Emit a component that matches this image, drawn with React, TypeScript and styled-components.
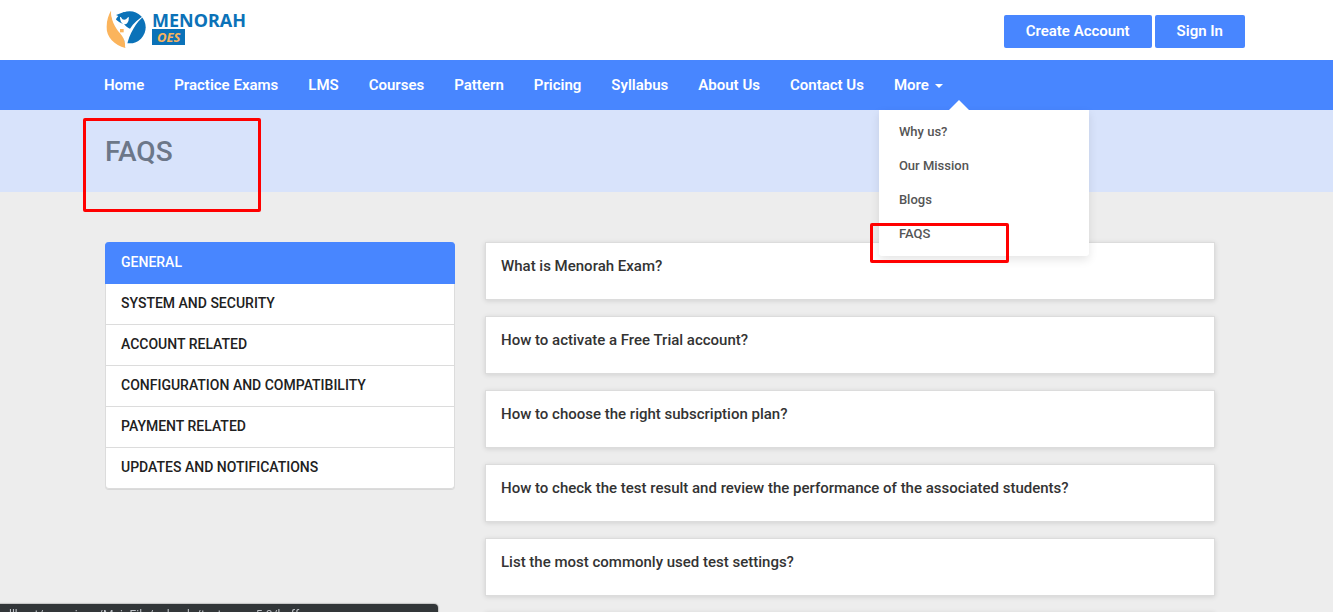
import React from "react";
import styled, { createGlobalStyle } from "styled-components";

const BLUE = "#4886ff";

const GlobalStyle = createGlobalStyle`
  *, *::before, *::after { box-sizing: border-box; }
  body {
    margin: 0;
    background: #ededed;
    color: #212529;
    font-family: Roboto, "Liberation Sans", sans-serif;
    font-size: 15px;
  }
  h1, h2, ul { margin: 0; padding: 0; }
  ul { list-style: none; }
  a { color: inherit; text-decoration: none; }
  button { font-family: inherit; border: 0; cursor: pointer; }
`;

const Page = styled.div`
  min-height: 100vh;
`;

const Container = styled.div`
  width: calc(100% - 13px);
  max-width: 1153px;
  margin: 0 auto;
  padding: 0 28px 0 15px;
`;

const Header = styled.header`
  background: #fff;
`;

const HeaderRow = styled(Container)`
  display: flex;
  align-items: center;
  justify-content: space-between;
  height: 60px;
`;

const Logo = styled.a`
  display: flex;
  align-items: center;
  gap: 5px;
`;

const LogoWords = styled.span`
  display: flex;
  flex-direction: column;
  align-items: flex-start;
  padding-bottom: 4px;
  font-family: "Noto Sans", "Open Sans", sans-serif;
  font-weight: 700;
`;

const LogoName = styled.span`
  color: #0b72b8;
  font-size: 18px;
  line-height: 18px;
`;

const LogoTag = styled.span`
  padding: 0 5px;
  background: #0b72b8;
  color: #fbb45c;
  font-size: 13px;
  font-style: italic;
  line-height: 16px;
`;

const Actions = styled.div`
  display: flex;
  gap: 3px;
  margin-right: -30px;
  padding-top: 2px;
`;

const ActionButton = styled.button`
  height: 33px;
  padding: 0 22px;
  border-radius: 2px;
  background: ${BLUE};
  color: #fff;
  font-size: 15px;
  font-weight: 600;
`;

const NavBar = styled.nav`
  background: ${BLUE};
`;

const NavList = styled.ul`
  display: flex;
  margin: 0 -16px;
`;

const NavItem = styled.li`
  position: relative;
`;

const NavLink = styled.a`
  display: flex;
  align-items: center;
  height: 50px;
  padding: 0 15px;
  color: #fff;
  font-size: 15px;
  font-weight: 600;
  white-space: nowrap;
`;

const Caret = styled.span`
  margin: 2px 0 0 6px;
  border: 4px solid transparent;
  border-top-color: #fff;
  border-bottom: 0;
`;

const Menu = styled.ul`
  position: absolute;
  z-index: 2;
  top: 50px;
  left: 0;
  width: 210px;
  padding: 5px 0;
  border-radius: 0 0 3px 3px;
  background: #fff;
  box-shadow: 0 4px 10px rgba(0, 0, 0, 0.1);

  &::before {
    content: "";
    position: absolute;
    top: -10px;
    left: 70px;
    border: 10px solid transparent;
    border-top: 0;
    border-bottom-color: #fff;
  }
`;

const MenuLink = styled.a`
  display: block;
  padding: 0 20px;
  color: #555;
  font-size: 13px;
  font-weight: 500;
  line-height: 34px;
`;

const Highlight = styled.span<{ $top: number; $left: number; $width: number; $height: number }>`
  position: absolute;
  z-index: 3;
  top: ${(p) => p.$top}px;
  left: ${(p) => p.$left}px;
  width: ${(p) => p.$width}px;
  height: ${(p) => p.$height}px;
  border: 3px solid #f00;
  border-radius: 2px;
  pointer-events: none;
`;

const Banner = styled.section`
  background: #d8e3fb;
`;

const BannerRow = styled.div`
  position: relative;
  padding: 25px 0 23px;
`;

const Title = styled.h1`
  color: #6c7789;
  font-size: 28px;
  font-weight: 500;
  line-height: 34px;
`;

const Columns = styled(Container)`
  display: grid;
  grid-template-columns: minmax(0, 350fr) minmax(0, 730fr);
  gap: 30px;
  align-items: start;
  padding-top: 50px;
  padding-bottom: 50px;
`;

const Topics = styled.ul`
  border-radius: 4px;
  box-shadow: 0 1px 0 #d8d8d8;
`;

const Topic = styled.li`
  border: 1px solid #dcdcdc;
  border-top: 0;
  background: #fff;

  &:first-child {
    border-color: ${BLUE};
    border-radius: 4px 4px 0 0;
    background: ${BLUE};
  }
  &:last-child {
    border-radius: 0 0 4px 4px;
  }
`;

const TopicLink = styled.a<{ $active: boolean }>`
  display: block;
  padding: ${(p) => (p.$active ? 10 : 9)}px 15px 11px;
  color: ${(p) => (p.$active ? "#fff" : "#212121")};
  font-size: 14px;
  font-weight: 500;
  line-height: 20px;
  text-transform: uppercase;
`;

const Questions = styled.div`
  display: flex;
  flex-direction: column;
  gap: 16px;
`;

const Card = styled.h2`
  min-height: 58px;
  border: 1px solid #dcdcdc;
  background: #fff;
  box-shadow: 0 1px 5px rgba(0, 0, 0, 0.12);
`;

const Question = styled.button`
  display: block;
  width: 100%;
  padding: 13px 15px 23px;
  background: transparent;
  color: #333;
  font-size: 15px;
  font-weight: 500;
  line-height: 20px;
  text-align: left;
`;

const StatusBar = styled.div`
  position: fixed;
  z-index: 4;
  bottom: 0;
  left: 0;
  width: 438px;
  max-width: 100%;
  height: 8px;
  padding: 4px 9px 0;
  overflow: hidden;
  border-radius: 0 4px 0 0;
  background: #323639;
  box-shadow: 0 0 1px 1px #c4c4c4;
  color: #bdc1c6;
  font-size: 12px;
  line-height: 14px;
  white-space: nowrap;
`;

const links = ["Home", "Practice Exams", "LMS", "Courses", "Pattern", "Pricing", "Syllabus", "About Us", "Contact Us"];
const menu = ["Why us?", "Our Mission", "Blogs", "FAQS"];
const topics = [
  "General",
  "System and Security",
  "Account Related",
  "Configuration and Compatibility",
  "Payment Related",
  "Updates and Notifications",
];
const questions = [
  "What is Menorah Exam?",
  "How to activate a Free Trial account?",
  "How to choose the right subscription plan?",
  "How to check the test result and review the performance of the associated students?",
  "List the most commonly used test settings?",
];

function LogoMark() {
  return (
    <svg width="42" height="40" viewBox="9 14 126 120" aria-hidden="true">
      <circle cx="83" cy="66" r="48" fill="#0b72b8" />
      <path d="M27 16C28 42 38 60 52 76C64 90 70 104 70 128C38 120 12 94 14 64C14 44 20 28 27 16Z" fill="#fbb45c" />
      <path
        d="M27 18L38 38C46 48 56 54 66 56C72 64 78 68 84 70C94 54 110 40 128 30C102 52 82 84 74 124L70 126C70 104 62 94 54 84C38 66 28 46 27 18Z"
        fill="#fff"
      />
      <path d="M54 34L80 34C82 50 74 57 67 57C60 56 54 48 54 34Z" fill="#fff" />
      <path d="M42 29L66 20L92 29L78 36C70 46 62 46 57 36Z" fill="#0b72b8" />
      <rect x="54" y="71" width="11" height="10" fill="#fbb45c" />
    </svg>
  );
}

export default function App() {
  return (
    <Page>
      <GlobalStyle />
      <Header>
        <HeaderRow>
          <Logo href="#" aria-label="Menorah OES">
            <LogoMark />
            <LogoWords>
              <LogoName>MENORAH</LogoName>
              <LogoTag>OES</LogoTag>
            </LogoWords>
          </Logo>
          <Actions>
            <ActionButton type="button">Create Account</ActionButton>
            <ActionButton type="button">Sign In</ActionButton>
          </Actions>
        </HeaderRow>
      </Header>
      <NavBar>
        <Container>
          <NavList>
            {links.map((text) => (
              <NavItem key={text}>
                <NavLink href="#">{text}</NavLink>
              </NavItem>
            ))}
            <NavItem>
              <NavLink href="#" aria-haspopup="true" aria-expanded="true">
                More
                <Caret />
              </NavLink>
              <Menu>
                {menu.map((text) => (
                  <li key={text}>
                    <MenuLink href="#">{text}</MenuLink>
                  </li>
                ))}
                <Highlight as="li" aria-hidden="true" $top={113} $left={-9} $width={139} $height={40} />
              </Menu>
            </NavItem>
          </NavList>
        </Container>
      </NavBar>
      <Banner>
        <Container>
          <BannerRow>
            <Title>FAQS</Title>
            <Highlight $top={8} $left={-22} $width={178} $height={94} />
          </BannerRow>
        </Container>
      </Banner>
      <Columns as="main">
        <Topics>
          {topics.map((text, i) => (
            <Topic key={text}>
              <TopicLink href="#" $active={i === 0}>
                {text}
              </TopicLink>
            </Topic>
          ))}
        </Topics>
        <Questions>
          {questions.map((text) => (
            <Card key={text}>
              <Question type="button">{text}</Question>
            </Card>
          ))}
          <Card as="div" />
        </Questions>
      </Columns>
      <StatusBar>llhost/exsenim.n/MainFile/uploads/test_nam_5.0/buff</StatusBar>
    </Page>
  );
}
